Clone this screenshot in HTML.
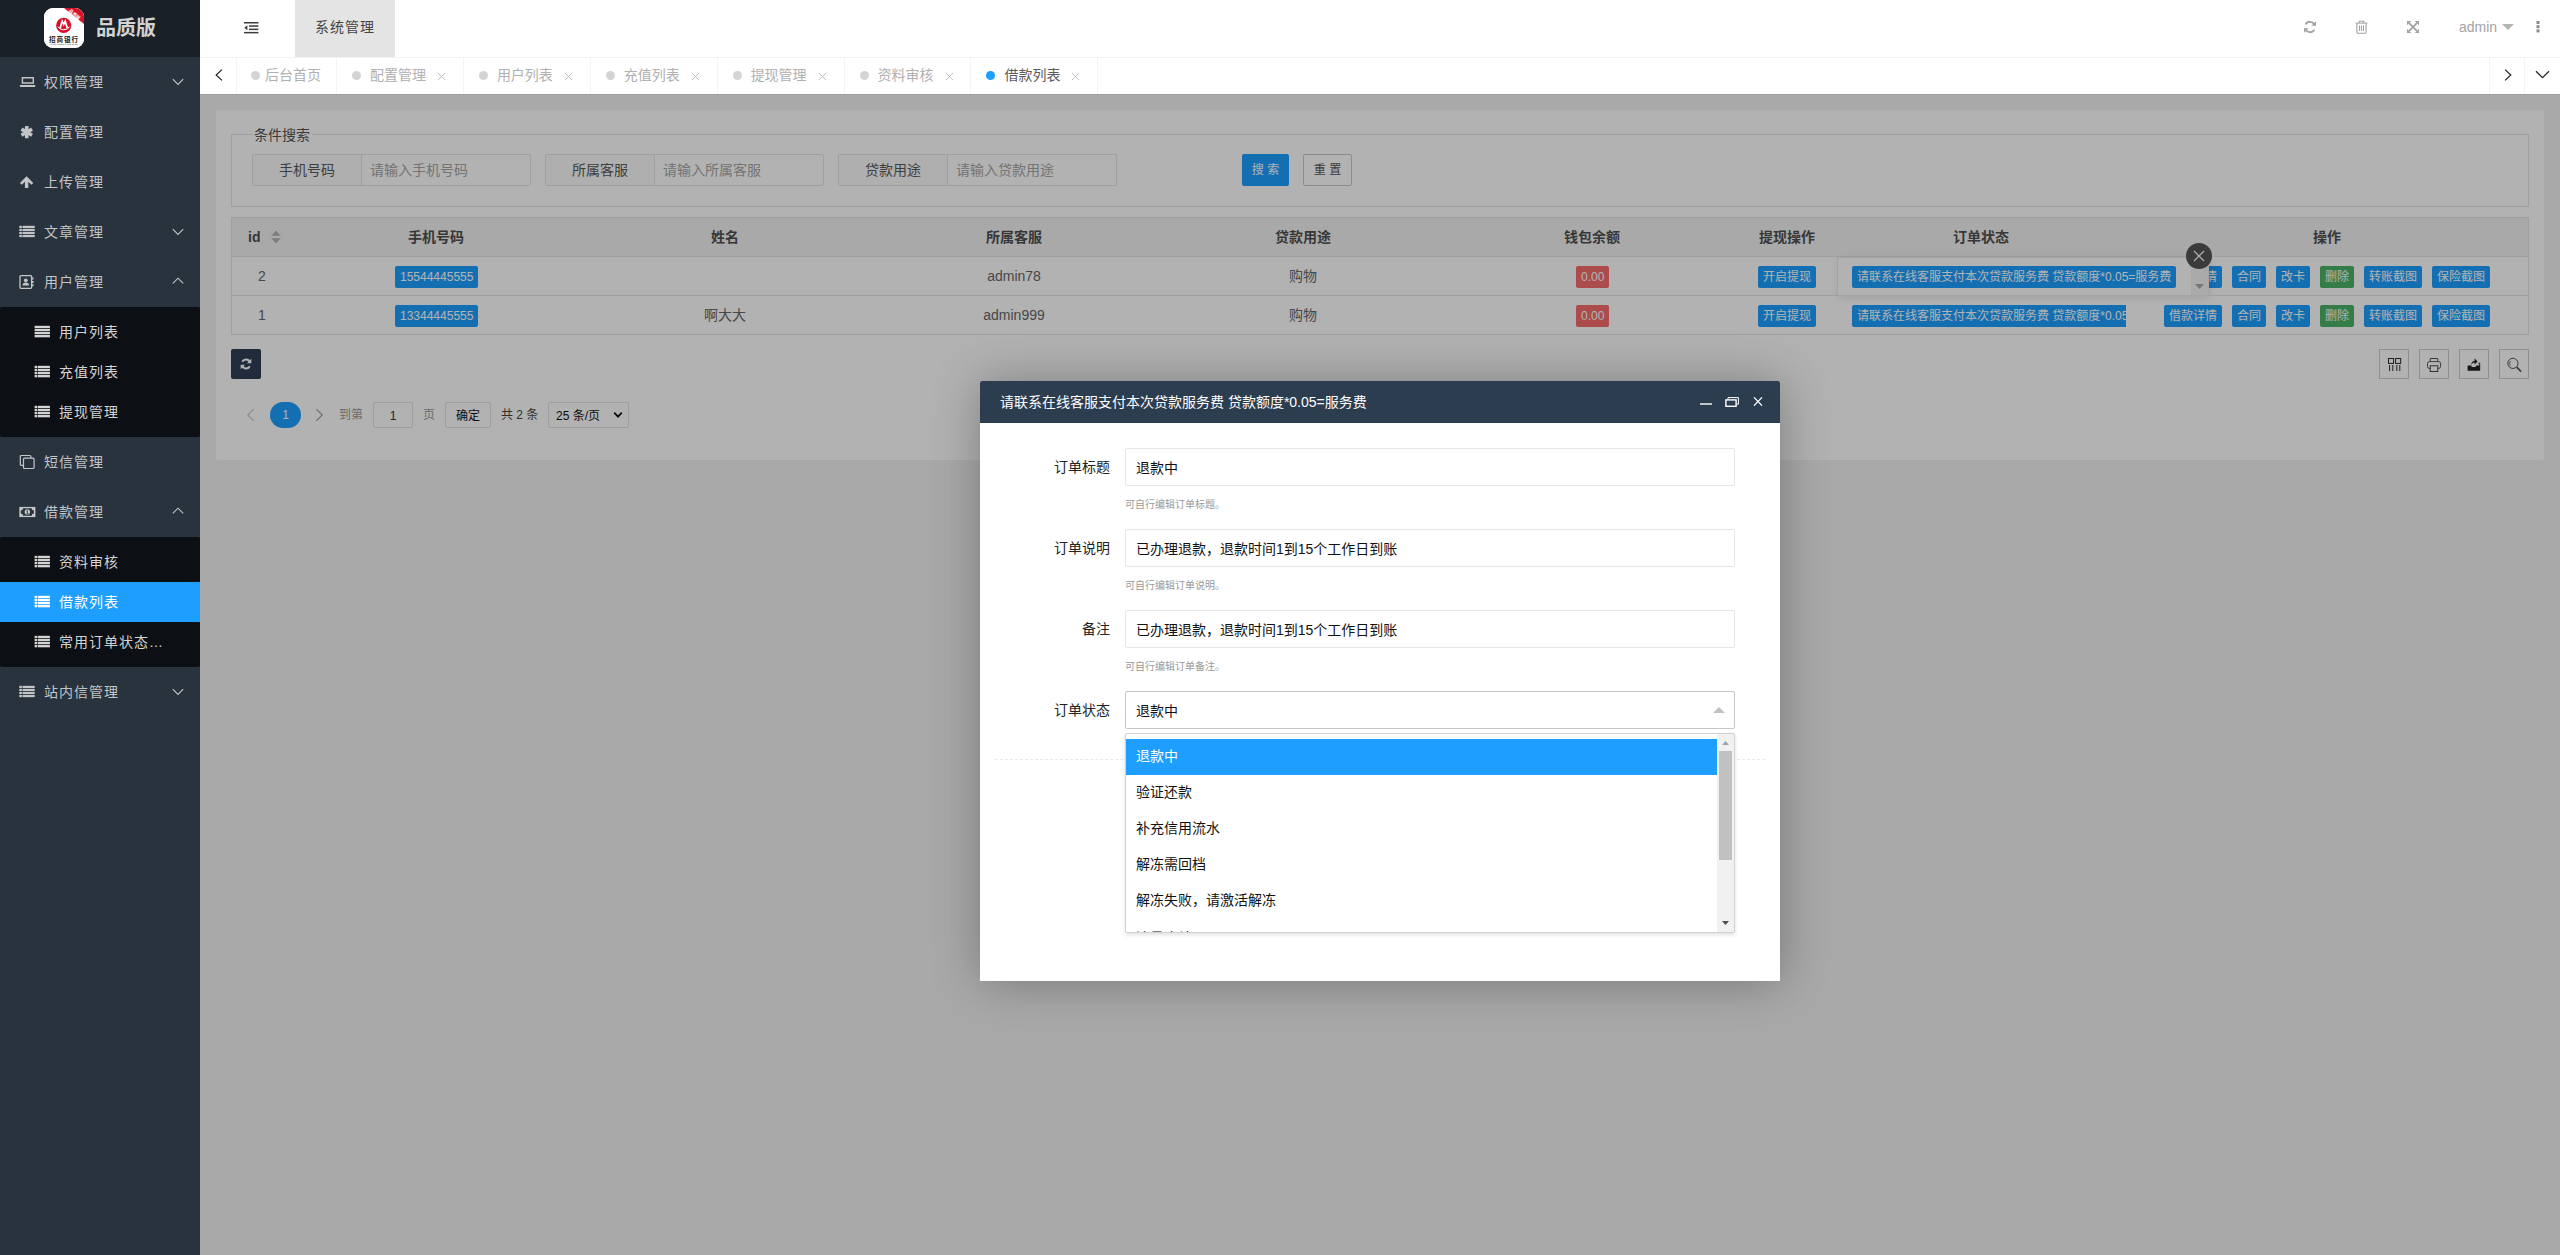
<!DOCTYPE html>
<html lang="zh-CN">
<head>
<meta charset="utf-8">
<title>系统管理</title>
<style>
*{box-sizing:border-box;margin:0;padding:0}
html,body{width:2560px;height:1255px;overflow:hidden}
body{position:relative;background:#f2f2f2;font-family:"Liberation Sans","Noto Sans CJK SC",sans-serif;font-size:14px;color:#333;-webkit-font-smoothing:auto}
.abs{position:absolute}
svg{display:block}
/* ---------- sidebar ---------- */
#side{position:absolute;left:0;top:0;width:200px;height:1255px;background:#28333e;overflow:hidden}
#logo{position:absolute;left:0;top:0;width:200px;height:57px;background:#192027}
#logo .ic{position:absolute;left:44px;top:8px;width:40px;height:40px;border-radius:9px;background:#fff;overflow:hidden}
#logo h1{position:absolute;left:96px;top:13px;height:30px;line-height:30px;font-size:20px;font-weight:bold;color:#d2d2d2;letter-spacing:0;white-space:nowrap}
.m1{position:absolute;left:0;width:200px;height:50px;line-height:50px;color:#c3c5c7;font-size:14px;letter-spacing:1px;white-space:nowrap}
.m1 .t{position:absolute;left:44px;top:0}
.m1 .i{position:absolute;left:19px;top:17px}
.m1 .c{position:absolute;left:172px;top:20px;width:12px;height:10px}
.sub{position:absolute;left:0;width:200px;background:#0c0f13;border-radius:2px}
.m2{position:absolute;left:0;width:200px;height:40px;line-height:40px;color:#d4d4d4;font-size:14px;letter-spacing:1px;white-space:nowrap}
.m2 .t{position:absolute;left:59px;top:0}
.m2 .i{position:absolute;left:34px;top:12px}
.m2.on{background:#1e9fff;color:#fff}
/* ---------- header ---------- */
#header{position:absolute;left:200px;top:0;width:2360px;height:57px;background:#fff}
#hline{position:absolute;left:200px;top:57px;width:2360px;height:1px;background:#f3f3f3}
#sysm{position:absolute;left:95px;top:0;width:100px;height:57px;background:#e4e4e4;line-height:54px;text-align:center;font-size:14px;color:#444;letter-spacing:1px}
/* ---------- tabs ---------- */
#tabs{position:absolute;left:200px;top:58px;width:2360px;height:36px;background:#fff}
.tab{position:absolute;top:0;height:36px;line-height:34px;font-size:14px;color:#b0b0b0;border-right:1px solid #f4f4f4;white-space:nowrap}
.tab .d{position:absolute;top:13px;width:9px;height:9px;border-radius:50%;background:#d4d4d4}
.tab .t{position:absolute;top:0}
.tab .x{position:absolute;top:14px;width:9px;height:9px}
.tab.on{color:#5c5c5c}
.tab.on .d{background:#1e9fff}
/* ---------- content ---------- */
#card{position:absolute;left:216px;top:110px;width:2328px;height:350px;background:#fff;border-radius:3px}
#fs{position:absolute;left:231px;top:134px;width:2298px;height:73px;border:1px solid #e6e6e6}
#lg{position:absolute;left:252px;top:124px;width:60px;height:22px;line-height:22px;background:#fff;text-align:center;font-size:14px;color:#555;white-space:nowrap}
.grp{position:absolute;top:154px;width:279px;height:32px;border:1px solid #e6e6e6;border-radius:2px;background:#fff}
.grp .l{position:absolute;left:0;top:0;width:109px;height:30px;line-height:31px;background:#fbfbfb;border-right:1px solid #e6e6e6;text-align:center;font-size:14px;color:#5a5a5a;white-space:nowrap}
.grp .p{position:absolute;left:117px;top:0;height:30px;line-height:31px;font-size:14px;color:#a6a6a6;white-space:nowrap}
.btn{position:absolute;height:22px;line-height:22px;padding:0 5px;font-size:12px;color:#fff;background:#1e9fff;border-radius:2px;white-space:nowrap;text-align:center}
.btn.r{background:#f56c6c}
.btn.g{background:#4cb468}
#tb{position:absolute;left:231px;top:217px;width:2298px;height:118px;border:1px solid #e6e6e6;background:#fff}
#th{position:absolute;left:0;top:0;width:2296px;height:38px;background:#f2f2f2}
.hl{position:absolute;left:0;width:2296px;height:1px;background:#e6e6e6}
.th{position:absolute;top:227px;height:20px;line-height:20px;font-size:14px;font-weight:bold;color:#505050;text-align:center;white-space:nowrap;transform:translateX(-50%)}
.td{position:absolute;height:20px;line-height:20px;font-size:14px;color:#666;text-align:center;white-space:nowrap;transform:translateX(-50%)}
.tool{position:absolute;top:349px;width:30px;height:30px;border:1px solid #ccc;background:#fff}
.pg{position:absolute;top:402px;height:26px;line-height:27px;font-size:12px;color:#333;white-space:nowrap}
#shade{position:absolute;left:200px;top:94px;width:2360px;height:1161px;background:rgba(0,0,0,.3)}
/* ---------- modal ---------- */
#modal{position:absolute;left:980px;top:381px;width:800px;height:600px;background:#fff;border-radius:2px 2px 0 0;box-shadow:1px 1px 50px rgba(0,0,0,.3)}
#mt{position:absolute;left:0;top:0;width:800px;height:42px;line-height:42px;background:#2d3d50;color:#fff;font-size:14px;padding-left:20px;border-radius:2px 2px 0 0;white-space:nowrap}
.fl{position:absolute;left:0;width:130px;height:38px;line-height:39px;text-align:right;font-size:14px;color:#222;white-space:nowrap}
.fi{position:absolute;left:145px;width:610px;height:38px;line-height:39px;border:1px solid #e6e6e6;border-radius:2px;padding-left:10px;font-size:14px;color:#111;white-space:nowrap;background:#fff}
.fh{position:absolute;left:145px;height:14px;line-height:14px;font-size:10px;color:#999;white-space:nowrap}
#dd{position:absolute;left:145px;top:352px;width:610px;height:200px;border:1px solid #d2d2d2;border-radius:2px;background:#fff;box-shadow:0 2px 4px rgba(0,0,0,.12);overflow:hidden}
#dd .o{position:absolute;left:0;width:591px;height:36px;line-height:35px;padding-left:10px;font-size:14px;color:#111;white-space:nowrap}
#dd .o.on{background:#1e9fff;color:#fff}
#sb{position:absolute;left:591px;top:0;width:17px;height:198px;background:#f1f1f1}
</style>
</head>
<body>
<div id="side">
<div id="logo"><div class="ic">
<svg width="40" height="40" viewBox="0 0 40 40">
<rect width="40" height="40" fill="#fff"/>
<path d="M20 0H40V16z" fill="#d9112a"/>
<text x="0" y="0" transform="translate(29.6 7.6) rotate(40)" font-size="4.4" font-weight="bold" fill="#fff" text-anchor="middle" font-family="Liberation Sans,Noto Sans CJK SC,sans-serif">品质版</text>
<circle cx="19.7" cy="17.4" r="7.6" fill="#d9112a"/>
<path d="M16 20.4l2.2-7.2 1.5 3.3 1.5-3.3 2.2 7.2" fill="none" stroke="#fff" stroke-width="1.7" stroke-linejoin="miter"/>
<path d="M14 18.6a5.9 4.2 0 0 0 11.4 0" fill="none" stroke="#fff" stroke-width="1"/>
<text x="20" y="34.2" font-size="6.6" font-weight="bold" fill="#222" text-anchor="middle" letter-spacing=".9" font-family="Liberation Sans,Noto Sans CJK SC,sans-serif">招商银行</text>
<text x="20" y="37.2" font-size="2.2" fill="#444" text-anchor="middle" font-family="Liberation Sans,sans-serif">CHINA MERCHANTS BANK</text>
</svg></div><h1>品质版</h1></div>
<div class="m1" style="top:57px"><svg class="i" width="18" height="16" viewBox="0 0 18 16" ><path d="M3.4 3.7h10.9v5.3H3.4z" fill="none" stroke="#c3c5c7" stroke-width="1.4"/><rect x=".8" y="10.9" width="15.6" height="2.1" rx=".9" fill="#c3c5c7"/></svg><span class="t">权限管理</span><svg class="c" width="12" height="10" viewBox="0 0 12 10"><path d="M.8 2.2L6 7.4l5.2-5.2" fill="none" stroke="#c3c5c7" stroke-width="1.1"/></svg></div>
<div class="m1" style="top:107px"><svg class="i" width="18" height="16" viewBox="0 0 18 16" ><g stroke="#c3c5c7" stroke-width="3.6" stroke-linecap="butt"><path d="M7.75 2.05v12.2"/><path d="M2.47 5.1l10.56 6.1"/><path d="M2.47 11.2l10.56-6.1"/></g></svg><span class="t">配置管理</span></div>
<div class="m1" style="top:157px"><svg class="i" width="18" height="16" viewBox="0 0 18 16" ><path d="M7.6 2.2L14.3 8.9 12.4 10.8 9.3 7.7V14H5.9V7.7L2.8 10.8 .9 8.9z" fill="#c3c5c7"/></svg><span class="t">上传管理</span></div>
<div class="m1" style="top:207px"><svg class="i" width="18" height="16" viewBox="0 0 18 16" ><rect x="0.3" y="1.8" width="2.6" height="2.2" fill="#c3c5c7"/><rect x="3.5" y="1.8" width="12.2" height="2.2" fill="#c3c5c7"/><rect x="0.3" y="4.85" width="2.6" height="2.2" fill="#c3c5c7"/><rect x="3.5" y="4.85" width="12.2" height="2.2" fill="#c3c5c7"/><rect x="0.3" y="7.9" width="2.6" height="2.2" fill="#c3c5c7"/><rect x="3.5" y="7.9" width="12.2" height="2.2" fill="#c3c5c7"/><rect x="0.3" y="10.95" width="2.6" height="2.2" fill="#c3c5c7"/><rect x="3.5" y="10.95" width="12.2" height="2.2" fill="#c3c5c7"/></svg><span class="t">文章管理</span><svg class="c" width="12" height="10" viewBox="0 0 12 10"><path d="M.8 2.2L6 7.4l5.2-5.2" fill="none" stroke="#c3c5c7" stroke-width="1.1"/></svg></div>
<div class="m1" style="top:257px"><svg class="i" width="18" height="16" viewBox="0 0 18 16" ><rect x="1" y="1.6" width="11.6" height="12.7" rx="1" fill="none" stroke="#c3c5c7" stroke-width="1.3"/><circle cx="6.8" cy="6.3" r="1.9" fill="#c3c5c7"/><path d="M3.5 11.6c0-2.2 1.2-3.2 3.3-3.2s3.3 1 3.3 3.2z" fill="#c3c5c7"/><path d="M13.8 3.6v2M13.8 6.9v2M13.8 10.2v2" stroke="#c3c5c7" stroke-width="1.5"/></svg><span class="t">用户管理</span><svg class="c" style="top:19px" width="12" height="10" viewBox="0 0 12 10"><path d="M.8 7.4L6 2.2l5.2 5.2" fill="none" stroke="#c3c5c7" stroke-width="1.1"/></svg></div>
<div class="sub" style="top:307px;height:130px"></div>
<div class="m2" style="top:312px"><svg class="i" width="18" height="16" viewBox="0 0 18 16" ><rect x="0.6" y="1.8" width="15.3" height="2.3" fill="#d4d4d4"/><rect x="0.6" y="4.87" width="15.3" height="2.3" fill="#d4d4d4"/><rect x="0.6" y="7.94" width="15.3" height="2.3" fill="#d4d4d4"/><rect x="0.6" y="11.01" width="15.3" height="2.3" fill="#d4d4d4"/></svg><span class="t">用户列表</span></div>
<div class="m2" style="top:352px"><svg class="i" width="18" height="16" viewBox="0 0 18 16" ><rect x="0.6" y="1.8" width="2.6" height="2.3" fill="#d4d4d4"/><rect x="3.8000000000000003" y="1.8" width="12.1" height="2.3" fill="#d4d4d4"/><rect x="0.6" y="4.87" width="2.6" height="2.3" fill="#d4d4d4"/><rect x="3.8000000000000003" y="4.87" width="12.1" height="2.3" fill="#d4d4d4"/><rect x="0.6" y="7.94" width="2.6" height="2.3" fill="#d4d4d4"/><rect x="3.8000000000000003" y="7.94" width="12.1" height="2.3" fill="#d4d4d4"/><rect x="0.6" y="11.01" width="2.6" height="2.3" fill="#d4d4d4"/><rect x="3.8000000000000003" y="11.01" width="12.1" height="2.3" fill="#d4d4d4"/></svg><span class="t">充值列表</span></div>
<div class="m2" style="top:392px"><svg class="i" width="18" height="16" viewBox="0 0 18 16" ><rect x="0.6" y="1.8" width="2.6" height="2.3" fill="#d4d4d4"/><rect x="3.8000000000000003" y="1.8" width="12.1" height="2.3" fill="#d4d4d4"/><rect x="0.6" y="4.87" width="2.6" height="2.3" fill="#d4d4d4"/><rect x="3.8000000000000003" y="4.87" width="12.1" height="2.3" fill="#d4d4d4"/><rect x="0.6" y="7.94" width="2.6" height="2.3" fill="#d4d4d4"/><rect x="3.8000000000000003" y="7.94" width="12.1" height="2.3" fill="#d4d4d4"/><rect x="0.6" y="11.01" width="2.6" height="2.3" fill="#d4d4d4"/><rect x="3.8000000000000003" y="11.01" width="12.1" height="2.3" fill="#d4d4d4"/></svg><span class="t">提现管理</span></div>
<div class="m1" style="top:437px"><svg class="i" width="18" height="16" viewBox="0 0 18 16" ><rect x="4.5" y="4.2" width="10.6" height="10.3" rx="1" fill="none" stroke="#c3c5c7" stroke-width="1.2"/><path d="M4.2 11.4H2.3a1 1 0 0 1-1-1V2.5a1 1 0 0 1 1-1h8.6a1 1 0 0 1 1 1v1.4" fill="none" stroke="#c3c5c7" stroke-width="1.2"/></svg><span class="t">短信管理</span></div>
<div class="m1" style="top:487px"><svg class="i" width="18" height="16" viewBox="0 0 18 16" ><rect x=".3" y="2.9" width="16.1" height="10.2" fill="#c3c5c7"/><path d="M4 4.2h8.7a2.2 2.2 0 0 0 2.2 2.2v3.2a2.2 2.2 0 0 0-2.2 2.2H4a2.2 2.2 0 0 0-2.2-2.2V6.4A2.2 2.2 0 0 0 4 4.2z" fill="#28333e"/><circle cx="8.35" cy="8" r="2.7" fill="#c3c5c7"/><path d="M7.6 6.9l.9-.5v3.2M7.5 9.7h2" stroke="#28333e" stroke-width=".8" fill="none"/></svg><span class="t">借款管理</span><svg class="c" style="top:19px" width="12" height="10" viewBox="0 0 12 10"><path d="M.8 7.4L6 2.2l5.2 5.2" fill="none" stroke="#c3c5c7" stroke-width="1.1"/></svg></div>
<div class="sub" style="top:537px;height:130px"></div>
<div class="m2" style="top:542px"><svg class="i" width="18" height="16" viewBox="0 0 18 16" ><rect x="0.6" y="1.8" width="2.6" height="2.3" fill="#d4d4d4"/><rect x="3.8000000000000003" y="1.8" width="12.1" height="2.3" fill="#d4d4d4"/><rect x="0.6" y="4.87" width="2.6" height="2.3" fill="#d4d4d4"/><rect x="3.8000000000000003" y="4.87" width="12.1" height="2.3" fill="#d4d4d4"/><rect x="0.6" y="7.94" width="2.6" height="2.3" fill="#d4d4d4"/><rect x="3.8000000000000003" y="7.94" width="12.1" height="2.3" fill="#d4d4d4"/><rect x="0.6" y="11.01" width="2.6" height="2.3" fill="#d4d4d4"/><rect x="3.8000000000000003" y="11.01" width="12.1" height="2.3" fill="#d4d4d4"/></svg><span class="t">资料审核</span></div>
<div class="m2 on" style="top:582px"><svg class="i" width="18" height="16" viewBox="0 0 18 16" ><rect x="0.6" y="1.8" width="2.6" height="2.3" fill="#fff"/><rect x="3.8000000000000003" y="1.8" width="12.1" height="2.3" fill="#fff"/><rect x="0.6" y="4.87" width="2.6" height="2.3" fill="#fff"/><rect x="3.8000000000000003" y="4.87" width="12.1" height="2.3" fill="#fff"/><rect x="0.6" y="7.94" width="2.6" height="2.3" fill="#fff"/><rect x="3.8000000000000003" y="7.94" width="12.1" height="2.3" fill="#fff"/><rect x="0.6" y="11.01" width="2.6" height="2.3" fill="#fff"/><rect x="3.8000000000000003" y="11.01" width="12.1" height="2.3" fill="#fff"/></svg><span class="t">借款列表</span></div>
<div class="m2" style="top:622px"><svg class="i" width="18" height="16" viewBox="0 0 18 16" ><rect x="0.6" y="1.8" width="2.6" height="2.3" fill="#d4d4d4"/><rect x="3.8000000000000003" y="1.8" width="12.1" height="2.3" fill="#d4d4d4"/><rect x="0.6" y="4.87" width="2.6" height="2.3" fill="#d4d4d4"/><rect x="3.8000000000000003" y="4.87" width="12.1" height="2.3" fill="#d4d4d4"/><rect x="0.6" y="7.94" width="2.6" height="2.3" fill="#d4d4d4"/><rect x="3.8000000000000003" y="7.94" width="12.1" height="2.3" fill="#d4d4d4"/><rect x="0.6" y="11.01" width="2.6" height="2.3" fill="#d4d4d4"/><rect x="3.8000000000000003" y="11.01" width="12.1" height="2.3" fill="#d4d4d4"/></svg><span class="t">常用订单状态…</span></div>
<div class="m1" style="top:667px"><svg class="i" width="18" height="16" viewBox="0 0 18 16" ><rect x="0.3" y="1.8" width="2.6" height="2.2" fill="#c3c5c7"/><rect x="3.5" y="1.8" width="12.2" height="2.2" fill="#c3c5c7"/><rect x="0.3" y="4.85" width="2.6" height="2.2" fill="#c3c5c7"/><rect x="3.5" y="4.85" width="12.2" height="2.2" fill="#c3c5c7"/><rect x="0.3" y="7.9" width="2.6" height="2.2" fill="#c3c5c7"/><rect x="3.5" y="7.9" width="12.2" height="2.2" fill="#c3c5c7"/><rect x="0.3" y="10.95" width="2.6" height="2.2" fill="#c3c5c7"/><rect x="3.5" y="10.95" width="12.2" height="2.2" fill="#c3c5c7"/></svg><span class="t">站内信管理</span><svg class="c" width="12" height="10" viewBox="0 0 12 10"><path d="M.8 2.2L6 7.4l5.2-5.2" fill="none" stroke="#c3c5c7" stroke-width="1.1"/></svg></div>
</div>
<div id="header">
<svg class="abs" style="left:44px;top:22px" width="15" height="12" viewBox="0 0 15 12"><g fill="#3c3c3c"><rect x="0" y="0" width="14.4" height="1.5"/><rect x="5" y="3.3" width="9.4" height="1.5"/><rect x="5" y="6.6" width="9.4" height="1.5"/><rect x="0" y="9.9" width="14.4" height="1.5"/><path d="M3.4 3.2v5L.3 5.7z"/></g></svg>
<div id="sysm">系统管理</div>
<svg class="abs" style="left:2103px;top:20px" width="14" height="14" viewBox="0 0 14 14"><g fill="none" stroke="#a3a3a3" stroke-width="1.9"><path d="M11.7 5.2A5 5 0 0 0 2.6 4.4"/><path d="M2.3 8.8a5 5 0 0 0 9.1.8"/></g><path d="M13 1.2v4.6H8.4z" fill="#a3a3a3"/><path d="M1 12.8V8.2h4.6z" fill="#a3a3a3"/></svg>
<svg class="abs" style="left:2155px;top:20px" width="13" height="14" viewBox="0 0 13 14"><g fill="none" stroke="#a3a3a3" stroke-width="1.1"><path d="M.6 3.1h11.8"/><path d="M4.3 2.9V1.3h4.4v1.6"/><path d="M1.9 3.3v9a1 1 0 0 0 1 1h7.2a1 1 0 0 0 1-1v-9"/><path d="M4.5 5.4v5.6M6.5 5.4v5.6M8.5 5.4v5.6"/></g></svg>
<svg class="abs" style="left:2207px;top:21px" width="12" height="12" viewBox="0 0 14 14"><g fill="#a3a3a3"><path d="M0 0h5L0 5zM14 0v5L9 0zM0 14V9l5 5zM14 14H9l5-5z"/></g><path d="M2.5 2.5l9 9M11.5 2.5l-9 9" stroke="#a3a3a3" stroke-width="2.2"/></svg>
<div class="abs" style="left:2259px;top:17px;height:20px;line-height:20px;font-size:14px;color:#a3a3a3">admin</div>
<svg class="abs" style="left:2302px;top:24px" width="12" height="6" viewBox="0 0 12 6"><path d="M0 0h12L6 6z" fill="#b5b5b5"/></svg>
<svg class="abs" style="left:2336px;top:21px" width="4" height="12" viewBox="0 0 4 12"><g fill="#8a8a8a"><rect x=".5" y="0" width="3" height="3"/><rect x=".5" y="4.2" width="3" height="3"/><rect x=".5" y="8.4" width="3" height="3"/></g></svg>
</div><div id="hline"></div>
<div id="tabs">
<div class="tab" style="left:0;width:37px"><svg class="abs" style="left:14.5px;top:11px" width="8" height="12" viewBox="0 0 8 12"><path d="M6.9 .6L1.2 6l5.7 5.4" fill="none" stroke="#222" stroke-width="1.2"/></svg></div>
<div class="tab" style="left:37px;width:100px"><i class="d" style="left:14px"></i><span class="t" style="left:28px">后台首页</span></div>
<div class="tab" style="left:137.0px;width:126.88px"><i class="d" style="left:15px"></i><span class="t" style="left:33px">配置管理</span><svg class="x" style="left:100px" width="9" height="9" viewBox="0 0 9 9"><path d="M.8.8l7.4 7.4M8.2.8L.8 8.2" stroke="#c4c0c0" stroke-width="1"/></svg></div>
<div class="tab" style="left:263.88px;width:126.88px"><i class="d" style="left:15px"></i><span class="t" style="left:33px">用户列表</span><svg class="x" style="left:100px" width="9" height="9" viewBox="0 0 9 9"><path d="M.8.8l7.4 7.4M8.2.8L.8 8.2" stroke="#c4c0c0" stroke-width="1"/></svg></div>
<div class="tab" style="left:390.76px;width:126.88px"><i class="d" style="left:15px"></i><span class="t" style="left:33px">充值列表</span><svg class="x" style="left:100px" width="9" height="9" viewBox="0 0 9 9"><path d="M.8.8l7.4 7.4M8.2.8L.8 8.2" stroke="#c4c0c0" stroke-width="1"/></svg></div>
<div class="tab" style="left:517.64px;width:126.88px"><i class="d" style="left:15px"></i><span class="t" style="left:33px">提现管理</span><svg class="x" style="left:100px" width="9" height="9" viewBox="0 0 9 9"><path d="M.8.8l7.4 7.4M8.2.8L.8 8.2" stroke="#c4c0c0" stroke-width="1"/></svg></div>
<div class="tab" style="left:644.52px;width:126.88px"><i class="d" style="left:15px"></i><span class="t" style="left:33px">资料审核</span><svg class="x" style="left:100px" width="9" height="9" viewBox="0 0 9 9"><path d="M.8.8l7.4 7.4M8.2.8L.8 8.2" stroke="#c4c0c0" stroke-width="1"/></svg></div>
<div class="tab on" style="left:771.4px;width:126.88px"><i class="d" style="left:15px"></i><span class="t" style="left:33px">借款列表</span><svg class="x" style="left:100px" width="9" height="9" viewBox="0 0 9 9"><path d="M.8.8l7.4 7.4M8.2.8L.8 8.2" stroke="#c4c0c0" stroke-width="1"/></svg></div>
<div class="tab" style="left:2289px;width:36px;border-left:1px solid #f4f4f4"><svg class="abs" style="left:13.7px;top:11px" width="8" height="12" viewBox="0 0 8 12"><path d="M1.1 .6L6.8 6l-5.7 5.4" fill="none" stroke="#222" stroke-width="1.2"/></svg></div>
<div class="tab" style="left:2325px;width:35px;border-right:0"><svg class="abs" style="left:10.3px;top:12.4px" width="15" height="9" viewBox="0 0 15 9"><path d="M1 1.2l6.5 6.4L14 1.2" fill="none" stroke="#222" stroke-width="1.2"/></svg></div>
</div>
<div id="card"></div>
<div id="fs"></div><div id="lg">条件搜索</div>
<div class="grp" style="left:252px"><div class="l">手机号码</div><div class="p">请输入手机号码</div></div>
<div class="grp" style="left:545px"><div class="l">所属客服</div><div class="p">请输入所属客服</div></div>
<div class="grp" style="left:838px"><div class="l">贷款用途</div><div class="p">请输入贷款用途</div></div>
<div class="btn" style="left:1242px;top:154px;width:47px;height:32px;line-height:33px;padding:0">搜 索</div>
<div class="btn" style="left:1303px;top:154px;width:49px;height:32px;line-height:31px;padding:0;background:#fff;border:1px solid #c9c9c9;color:#555">重 置</div>
<div id="tb"><div id="th"></div><div class="hl" style="top:38px"></div><div class="hl" style="top:77px"></div></div>
<div class="th" style="left:254px;transform:none;text-align:left;left:248px">id</div>
<svg class="abs" style="left:271px;top:230px" width="10" height="14" viewBox="0 0 10 14"><path d="M5 .5l4.6 5.3H.4z" fill="#b2b2b2"/><path d="M5 13.5L.4 8.2h9.2z" fill="#b2b2b2"/></svg>
<div class="th" style="left:436px">手机号码</div>
<div class="th" style="left:725px">姓名</div>
<div class="th" style="left:1014px">所属客服</div>
<div class="th" style="left:1303px">贷款用途</div>
<div class="th" style="left:1592px">钱包余额</div>
<div class="th" style="left:1787px">提现操作</div>
<div class="th" style="left:1981px">订单状态</div>
<div class="th" style="left:2327px">操作</div>
<div class="td" style="left:262px;top:266px">2</div>
<div class="td" style="left:262px;top:305px">1</div>
<div class="btn" style="left:395px;top:266px;width:83px">15544445555</div>
<div class="btn" style="left:395px;top:305px;width:83px">13344445555</div>
<div class="td" style="left:725px;top:305px">啊大大</div>
<div class="td" style="left:1014px;top:266px">admin78</div>
<div class="td" style="left:1014px;top:305px">admin999</div>
<div class="td" style="left:1303px;top:266px">购物</div>
<div class="td" style="left:1303px;top:305px">购物</div>
<div class="btn r" style="left:1576px;top:266px;width:33px">0.00</div>
<div class="btn r" style="left:1576px;top:305px;width:33px">0.00</div>
<div class="btn" style="left:1758px;top:266px;width:58px">开启提现</div>
<div class="btn" style="left:1758px;top:305px;width:58px">开启提现</div>
<div class="abs" style="left:1837px;top:296px;width:289px;height:38px;overflow:hidden"><div class="btn" style="left:15px;top:9px;width:324px;border-radius:2px">请联系在线客服支付本次贷款服务费 贷款额度*0.05=服务费</div></div>
<div class="btn" style="left:2164px;top:266px;width:58px">借款详情</div>
<div class="btn" style="left:2232px;top:266px;width:34px">合同</div>
<div class="btn" style="left:2276px;top:266px;width:34px">改卡</div>
<div class="btn g" style="left:2320px;top:266px;width:34px">删除</div>
<div class="btn" style="left:2364px;top:266px;width:58px">转账截图</div>
<div class="btn" style="left:2432px;top:266px;width:58px">保险截图</div>
<div class="btn" style="left:2164px;top:305px;width:58px">借款详情</div>
<div class="btn" style="left:2232px;top:305px;width:34px">合同</div>
<div class="btn" style="left:2276px;top:305px;width:34px">改卡</div>
<div class="btn g" style="left:2320px;top:305px;width:34px">删除</div>
<div class="btn" style="left:2364px;top:305px;width:58px">转账截图</div>
<div class="btn" style="left:2432px;top:305px;width:58px">保险截图</div>

<!-- footer tools -->
<div class="abs" style="left:231px;top:349px;width:30px;height:30px;background:#2f4056;border-radius:2px"><svg class="abs" style="left:9px;top:9px" width="12" height="12" viewBox="0 0 14 14"><g fill="none" stroke="#fff" stroke-width="2.3"><path d="M11.7 5.2A5 5 0 0 0 2.6 4.4"/><path d="M2.3 8.8a5 5 0 0 0 9.1.8"/></g><path d="M13.2 1v5H8.2z" fill="#fff"/><path d="M.8 13V8h5z" fill="#fff"/></svg></div>
<div class="tool" style="left:2379px"><svg class="abs" style="left:8px;top:8px" width="14" height="13" viewBox="0 0 14 13"><g fill="none" stroke="#2a2a2a" stroke-width="1"><rect x=".5" y=".5" width="5.1" height="4.9"/><rect x="7.6" y=".5" width="5.1" height="4.9"/><path d="M1.6 7v6M4.8 7v6M8.8 7v6M11.8 7v6"/></g></svg></div>
<div class="tool" style="left:2419px"><svg class="abs" style="left:7px;top:8px" width="14" height="14" viewBox="0 0 14 14"><g fill="none" stroke="#555" stroke-width="1"><path d="M3.2 3.6V.5h7.6v3.1"/><rect x=".5" y="3.6" width="13" height="6.8" rx="1.8"/><rect x="3.2" y="7.8" width="7.6" height="5.7" fill="#fff" stroke="#444"/></g></svg></div>
<div class="tool" style="left:2459px"><svg class="abs" style="left:7px;top:8px" width="14" height="14" viewBox="0 0 14 14"><path d="M.6 7.6h4v1.5h4.2V7.6h3.9V12.8H.6z" fill="#222"/><path d="M11.4 5.2h1.3v7.6" fill="none" stroke="#222" stroke-width="1"/><path d="M4.2 7C4.4 4.4 5.6 3 7.6 2.7V.6l3 2.9-3 2.9V4.4C6 4.6 5 5.4 4.2 7z" fill="#222"/></svg></div>
<div class="tool" style="left:2499px"><svg class="abs" style="left:6px;top:6px" width="18" height="18" viewBox="0 0 18 18"><circle cx="6.9" cy="7.35" r="5.1" fill="none" stroke="#555" stroke-width="1"/><path d="M4.3 5.2a3.4 3.4 0 0 0 0 4.4" fill="none" stroke="#555" stroke-width=".9"/><path d="M10.7 11.2l4.4 4.4" stroke="#555" stroke-width="1.7"/></svg></div>
<!-- pagination -->
<svg class="abs" style="left:246px;top:408px" width="9" height="14" viewBox="0 0 9 14"><path d="M7.6 1.2L1.8 7l5.8 5.8" fill="none" stroke="#c8c8c8" stroke-width="1.1"/></svg>
<div class="pg" style="left:270px;width:31px;background:#1e9fff;color:#fff;border-radius:13px;text-align:center">1</div>
<svg class="abs" style="left:315px;top:408px" width="9" height="14" viewBox="0 0 9 14"><path d="M1.4 1.2L7.2 7l-5.8 5.8" fill="none" stroke="#999" stroke-width="1.1"/></svg>
<div class="pg" style="left:339px;color:#999">到第</div>
<div class="pg" style="left:373px;width:40px;border:1px solid #e2e2e2;border-radius:2px;line-height:26px;text-align:center;background:#fff">1</div>
<div class="pg" style="left:423px;color:#999">页</div>
<div class="pg" style="left:445px;width:46px;border:1px solid #e2e2e2;border-radius:2px;line-height:26px;text-align:center;background:#fff;color:#111">确定</div>
<div class="pg" style="left:501px;color:#444">共 2 条</div>
<div class="pg" style="left:548px;width:81px;border:1px solid #e2e2e2;border-radius:2px;line-height:26px;padding-left:7px;background:#fff;color:#111">25 条/页<svg class="abs" style="left:64px;top:8px" width="10" height="8" viewBox="0 0 10 8"><path d="M1.2 1.6L5 5.6l3.8-4" fill="none" stroke="#111" stroke-width="1.8"/></svg></div>
<div class="abs" style="left:1837px;top:257px;width:372px;height:39px;background:#fff;border:1px solid #ebebeb;box-shadow:1px 2px 8px rgba(0,0,0,.1)">
<div class="btn" style="left:14px;top:8px;width:324px">请联系在线客服支付本次贷款服务费 贷款额度*0.05=服务费</div>
<div class="abs" style="left:353px;top:9px;width:17px;height:28px;background:#f4f4f4"><svg class="abs" style="left:4px;top:17px" width="9" height="5" viewBox="0 0 9 5"><path d="M0 0h9L4.5 5z" fill="#aaa"/></svg></div>
</div>
<div class="abs" style="left:2186px;top:243px;width:26px;height:26px;border-radius:50%;background:#555"><svg class="abs" style="left:7px;top:7px" width="12" height="12" viewBox="0 0 12 12"><path d="M1 1l10 10M11 1L1 11" stroke="#fff" stroke-width="1.2"/></svg></div>

<div class="abs" style="left:200px;top:94px;width:2360px;height:1px;background:rgba(0,0,0,.06)"></div>
<div id="shade"></div>
<div id="modal">
<div id="mt">请联系在线客服支付本次贷款服务费 贷款额度*0.05=服务费</div>
<svg class="abs" style="left:720px;top:22px" width="12" height="2" viewBox="0 0 12 2"><rect width="12" height="1.4" y=".3" fill="#fff"/></svg>
<svg class="abs" style="left:745px;top:16px" width="14" height="10" viewBox="0 0 14 10"><path d="M3 2.4V.6h10.4v6.6h-1.8" fill="none" stroke="#fff" stroke-width="1"/><rect x=".9" y="2.9" width="10.2" height="6.4" fill="none" stroke="#fff" stroke-width="1.4"/></svg>
<svg class="abs" style="left:773px;top:16px" width="10" height="9" viewBox="0 0 10 9"><path d="M1 .4l8 8.2M9 .4L1 8.6" stroke="#fff" stroke-width="1.3"/></svg>
<div class="fl" style="top:67px">订单标题</div><div class="fi" style="top:67px">退款中</div><div class="fh" style="top:117px">可自行编辑订单标题。</div>
<div class="fl" style="top:148px">订单说明</div><div class="fi" style="top:148px">已办理退款，退款时间1到15个工作日到账</div><div class="fh" style="top:198px">可自行编辑订单说明。</div>
<div class="fl" style="top:229px">备注</div><div class="fi" style="top:229px">已办理退款，退款时间1到15个工作日到账</div><div class="fh" style="top:279px">可自行编辑订单备注。</div>
<div class="fl" style="top:310px">订单状态</div><div class="fi" style="top:310px;border-color:#c6c6c6">退款中<svg class="abs" style="left:587px;top:15px" width="12" height="6" viewBox="0 0 12 6"><path d="M0 6h12L6 0z" fill="#c2c2c2"/></svg></div>
<div class="abs" style="left:15px;top:378px;width:770px;height:0;border-top:1px dashed #e7eaec"></div>
<div id="dd">
<div class="o on" style="top:5px">退款中</div>
<div class="o" style="top:41px">验证还款</div>
<div class="o" style="top:77px">补充信用流水</div>
<div class="o" style="top:113px">解冻需回档</div>
<div class="o" style="top:149px">解冻失败，请激活解冻</div>
<div class="o" style="top:187px">流量冻结</div>
<div id="sb"><svg class="abs" style="left:5px;top:7px" width="7" height="4" viewBox="0 0 7 4"><path d="M0 4h7L3.5 0z" fill="#a3a3a3"/></svg><div class="abs" style="left:2px;top:17px;width:13px;height:109px;background:#c1c1c1"></div><svg class="abs" style="left:5px;top:187px" width="7" height="4" viewBox="0 0 7 4"><path d="M0 0h7L3.5 4z" fill="#505050"/></svg></div>
</div>
</div>


</body>
</html>
